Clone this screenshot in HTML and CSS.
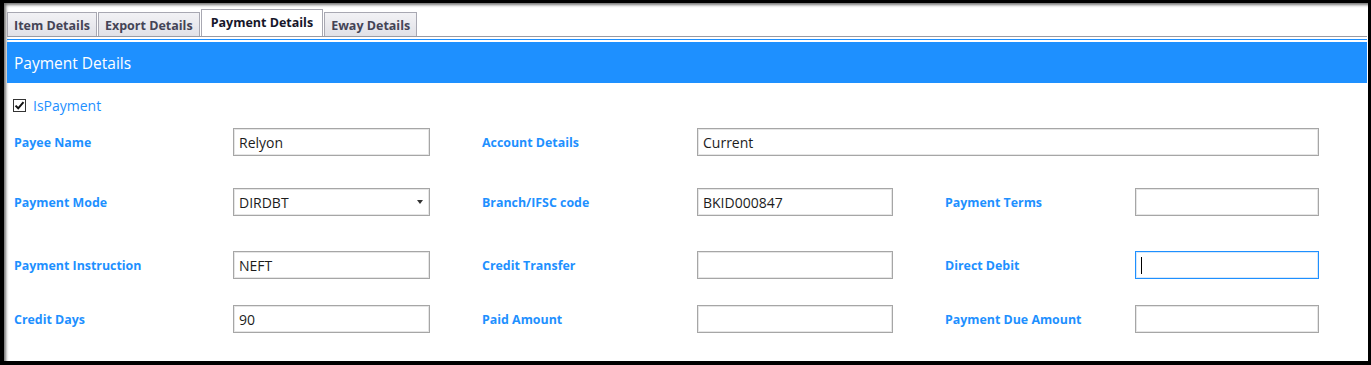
FILE: index.html
```html
<!DOCTYPE html>
<html lang="en">
<head>
  <meta charset="UTF-8">
  <meta name="viewport" content="width=device-width, initial-scale=1.0">
  <title>Payment Details</title>
  <link rel="stylesheet" href="styles.css">
</head>
<body>
  <div class="window">
    <div class="tabstrip">
      <div class="tab">Item Details</div>
      <div class="tab">Export Details</div>
      <div class="tab active">Payment Details</div>
      <div class="tab">Eway Details</div>
    </div>

    <div class="panel">
      <div class="panel-header">Payment Details</div>

      <label class="check-row">
        <span class="checkbox">
          <svg width="11" height="11" viewBox="0 0 11 11"><path d="M1.5 5.6 L4.2 8.3 L9.5 2.2" fill="none" stroke="#111" stroke-width="2"/></svg>
        </span>
        <span class="check-label">IsPayment</span>
      </label>

      <div class="form-grid">
        <!-- row 1 -->
        <div class="field-label">Payee Name</div>
        <div class="field"><input class="text-input" type="text" value="Relyon"></div>
        <div class="field-label">Account Details</div>
        <div class="field wide"><input class="text-input" type="text" value="Current"></div>

        <!-- row 2 -->
        <div class="field-label">Payment Mode</div>
        <div class="field">
          <div class="select-box">
            <span>DIRDBT</span>
            <span class="arrow"></span>
          </div>
        </div>
        <div class="field-label">Branch/IFSC code</div>
        <div class="field"><input class="text-input mid" type="text" value="BKID000847"></div>
        <div class="field-label">Payment Terms</div>
        <div class="field"><input class="text-input short" type="text" value=""></div>

        <!-- row 3 -->
        <div class="field-label">Payment Instruction</div>
        <div class="field"><input class="text-input" type="text" value="NEFT"></div>
        <div class="field-label">Credit Transfer</div>
        <div class="field"><input class="text-input mid" type="text" value=""></div>
        <div class="field-label">Direct Debit</div>
        <div class="field">
          <div class="text-input short focused"><span class="caret"></span></div>
        </div>

        <!-- row 4 -->
        <div class="field-label">Credit Days</div>
        <div class="field"><input class="text-input" type="text" value="90"></div>
        <div class="field-label">Paid Amount</div>
        <div class="field"><input class="text-input mid" type="text" value=""></div>
        <div class="field-label">Payment Due Amount</div>
        <div class="field"><input class="text-input short" type="text" value=""></div>
      </div>
    </div>
  </div>
</body>
</html>
```

FILE: styles.css
```css
html, body {
  height: 100%;
}

body {
  margin: 0;
  padding: 3px 3px 4px 4px;
  box-sizing: border-box;
  background-color: #000;
  font-family: "Open Sans", "Noto Sans", Arial, sans-serif;
}

.window {
  height: 100%;
  box-sizing: border-box;
  padding: 0 1px 0 3px;
  background-color: #fff;
  box-shadow: inset 3px 3px 3px -1px rgba(0,0,0,0.55);
  overflow: hidden;
}

/* tabs */
.tabstrip {
  display: flex;
  align-items: flex-end;
  height: 33px;
  border-bottom: 1px solid #9a9aa2;
}
.tab {
  box-sizing: border-box;
  height: 24px;
  line-height: 25px;
  padding: 0 6px;
  margin-right: 1px;

  font-size: 12.5px;
  font-weight: 700;
  color: #444456;

  border: 1px solid #a8a8b2;
  border-bottom: none;
  background: linear-gradient(#f2f2f5, #e1e1e7);
}
.tab.active {
  height: 27px;
  line-height: 26px;
  padding: 0 9px;
  color: #16162a;
  background: #fff;
}

/* panel */
.panel {
  margin-top: 2px;
  padding-top: 2px;
  border-top: 1px solid #1e90ff;
}
.panel-header {
  height: 41px;
  line-height: 42px;
  padding-left: 7px;
  font-size: 15.5px;
  color: #fff;
  background-color: #1e90ff;
}

.check-row {
  display: flex;
  align-items: center;
  height: 20px;
  margin: 12px 0 0 6px;
}
.checkbox {
  display: flex;
  align-items: center;
  justify-content: center;
  width: 11px;
  height: 11px;
  border: 1px solid #333;
  background: #fff;
}
.check-label {
  margin-left: 7px;
  font-size: 14px;
  color: #1e90ff;
}

/* form */
.form-grid {
  display: grid;
  grid-template-columns: 219px 249px 215px 248px 190px 184px;
  grid-template-rows: 60px 63px 54px 28px;
  margin: 13px 0 0 7px;
}
.field-label {
  height: 28px;
  line-height: 30px;
  font-size: 12.4px;
  font-weight: 700;
  color: #1e90ff;
}
.field.wide {
  grid-column: span 3;
}

.text-input {
  box-sizing: border-box;
  display: block;
  width: 197px;
  height: 28px;
  padding: 0 5px;
  margin: 0;

  font-family: inherit;
  font-size: 14px;
  color: #1c1c1c;

  border: 1px solid #a6a6a6;
  box-shadow: inset 0 0 0 1px #e6e6e6;
  border-radius: 0;
  outline: none;
  background: #fff;
}
.text-input.mid {
  width: 196px;
}
.text-input.short {
  width: 184px;
}
.field.wide .text-input {
  width: 100%;
}
.text-input.focused {
  position: relative;
  border-color: #1e90ff;
  box-shadow: inset 0 0 0 1px #d6e8fb;
}
.caret {
  position: absolute;
  left: 5px;
  top: 5px;
  width: 1px;
  height: 17px;
  background: #000;
}

.select-box {
  box-sizing: border-box;
  display: flex;
  align-items: center;
  justify-content: space-between;
  width: 197px;
  height: 28px;
  padding: 0 6px 0 5px;
  font-size: 14px;
  color: #1c1c1c;
  border: 1px solid #a6a6a6;
  box-shadow: inset 0 0 0 1px #e6e6e6;
}
.select-box .arrow {
  width: 0;
  height: 0;
  border-left: 3.5px solid transparent;
  border-right: 3.5px solid transparent;
  border-top: 4px solid #333;
}
```
